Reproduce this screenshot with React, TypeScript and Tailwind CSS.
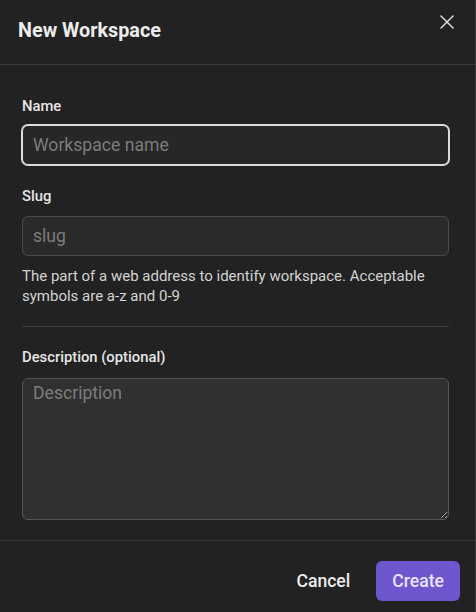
import { X } from "lucide-react";

function Label({ children }: { children: React.ReactNode }) {
  return (
    <label className="block text-[14.8px] font-medium leading-5 text-[#e6e6e6]">
      {children}
    </label>
  );
}

export default function App() {
  return (
    <div className="flex h-[612px] w-[476px] flex-col border-r border-[#3a3a3a] bg-[#222222] font-['Roboto',sans-serif] text-[#e6e6e6]">
      <div className="flex h-[65px] shrink-0 items-start justify-between border-b border-[#393939] pl-[18px] pr-[16px]">
        <h2 className="mt-[19px] text-[19.8px] font-bold leading-6 text-[#ececec]">
          New Workspace
        </h2>
        <button className="mt-[10px] text-[#e0e0e0]" type="button">
          <X className="size-[24px]" strokeWidth={1.4} />
        </button>
      </div>

      <div className="flex flex-1 flex-col pl-[22px] pr-[26px] pt-[31px]">
        <Label>Name</Label>
        <input
          className="mt-[9px] h-10 w-full rounded-[6px] border border-[#dcdcdc] bg-[#272727] px-[10px] text-[17.6px] text-[#e6e6e6] shadow-[0_0_0_1px_#dcdcdc] outline-none placeholder:text-[#7c7c7c]"
          placeholder="Workspace name"
        />

        <div className="mt-[21px]">
          <Label>Slug</Label>
        </div>
        <input
          className="mt-[10px] h-10 w-full rounded-[6px] border border-[#4a4a4a] bg-[#2a2a2a] px-[10px] text-[17.6px] text-[#e6e6e6] outline-none placeholder:text-[#7c7c7c]"
          placeholder="slug"
        />
        <p className="mt-[10px] text-[15px] leading-5 text-[#d2d2d2]">
          The part of a web address to identify workspace. Acceptable symbols are a-z and 0-9
        </p>

        <div className="mt-[20px] h-px w-full bg-[#3d3d3d]" />

        <div className="mt-[20px]">
          <Label>Description (optional)</Label>
        </div>
        <textarea
          className="mt-[11px] h-[142px] w-full rounded-[6px] border border-[#555555] bg-[#303030] px-[10px] py-[2px] text-[17.6px] leading-6 text-[#e6e6e6] outline-none placeholder:text-[#7c7c7c]"
          placeholder="Description"
        />
      </div>

      <div className="flex h-[72px] shrink-0 items-start justify-end gap-[26px] border-t border-[#393939] pr-[15px] pt-[20px]">
        <button className="h-10 text-[17.6px] font-medium text-[#ececec]" type="button">
          Cancel
        </button>
        <button
          className="h-10 rounded-[6px] bg-[#6e56cf] px-[16px] text-[17.6px] font-medium text-[#e8e2ff]"
          type="button"
        >
          Create
        </button>
      </div>
    </div>
  );
}
